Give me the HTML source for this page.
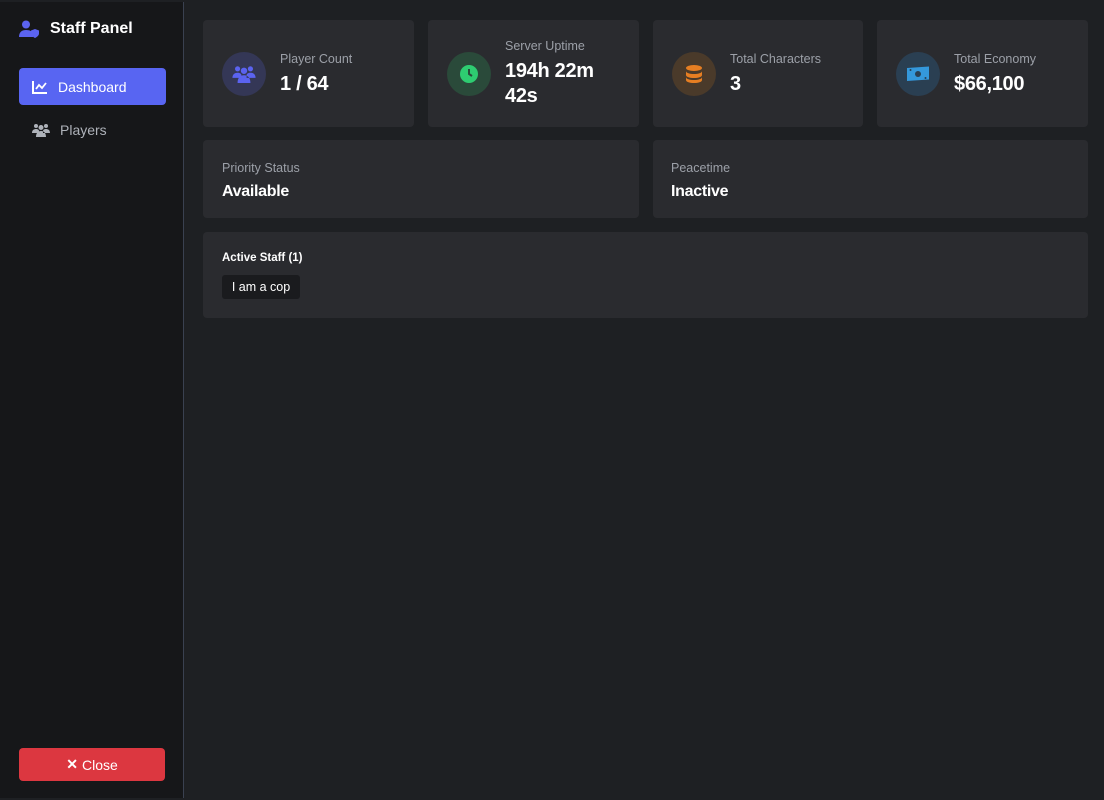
<!DOCTYPE html>
<html><head><meta charset="utf-8"><style>
*{box-sizing:border-box;margin:0;padding:0}
body{width:1104px;height:800px;background:#1e2023;font-family:"Liberation Sans",sans-serif;overflow:hidden;position:relative}
.side{position:absolute;left:0;top:2px;width:184px;height:796px;background:#161719;border-right:1px solid #3a4150}
.brand{position:absolute;left:19px;top:20px;color:#fff;font-weight:bold;font-size:16px;display:flex;align-items:center;gap:9px}
.nav{position:absolute;left:19px;width:147px;height:37px;border-radius:4px;display:flex;align-items:center;padding-left:13px;gap:10px;font-size:14px}
.close{position:absolute;left:19px;top:746px;width:146px;height:33px;background:#dc3740;border-radius:4px;color:#fff;font-size:14px;display:flex;align-items:center;justify-content:center}
.card{position:absolute;background:#2a2b2f;border-radius:4px}
.ic{position:absolute;left:19px;top:32px;width:44px;height:44px;border-radius:50%;display:flex;align-items:center;justify-content:center}
.lbl{color:#9ca0a8;font-size:12.5px}
.val{color:#fff;font-weight:bold;font-size:20px;margin-top:6px;line-height:25px;letter-spacing:-0.3px}
.t{position:absolute;left:77px;top:31px}
</style></head><body>
<div class="side">
 <div class="brand" style="top:18px"><svg width="22" height="18" viewBox="0 0 22 18"><circle cx="7" cy="4.5" r="4" fill="#5b63f0"/><path d="M0 17c0-5 3-7 7-7s6 1.5 7 3v4z" fill="#5b63f0"/><path d="M16 9l4 1.5v3c0 2-2 3.5-4 4.5-2-1-4-2.5-4-4.5v-3z" fill="#5b63f0"/></svg>Staff Panel</div>
 <div class="nav" style="top:66px;background:#5865f2;color:#fff"><svg width="16" height="14" viewBox="0 0 16 14"><path d="M1 1v12h14" stroke="#fff" stroke-width="2" fill="none"/><path d="M4 9l3-4 3 3 4-5" stroke="#fff" stroke-width="1.8" fill="none"/></svg>Dashboard</div>
 <div class="nav" style="top:109px;color:#aeb2b9"><svg width="18" height="14" viewBox="0 0 18 14"><circle cx="4" cy="3" r="2" fill="#aeb2b9"/><circle cx="14" cy="3" r="2" fill="#aeb2b9"/><circle cx="9" cy="4.5" r="2.5" fill="#aeb2b9"/><path d="M0 10c0-3 2-4 4-4s3 1 3 2v2zM18 10c0-3-2-4-4-4s-3 1-3 2v2zM4 14c0-4 2-6 5-6s5 2 5 6z" fill="#aeb2b9"/></svg>Players</div>
 <div class="close"><span style="font-weight:bold;margin-right:4px">✕</span>Close</div>
</div>
<div class="card" style="left:203px;top:20px;width:211px;height:107px">
 <div class="ic" style="background:#343756"><svg width="24" height="18" viewBox="0 0 18 14"><circle cx="4" cy="3" r="2" fill="#5b63f0"/><circle cx="14" cy="3" r="2" fill="#5b63f0"/><circle cx="9" cy="4.5" r="2.5" fill="#5b63f0"/><path d="M0 10c0-3 2-4 4-4s3 1 3 2v2zM18 10c0-3-2-4-4-4s-3 1-3 2v2zM4 14c0-4 2-6 5-6s5 2 5 6z" fill="#5b63f0"/></svg></div>
 <div class="t" style="top:32px"><div class="lbl">Player Count</div><div class="val">1 / 64</div></div></div>
<div class="card" style="left:428px;top:20px;width:211px;height:107px">
 <div class="ic" style="background:#2a4a3a"><svg width="20" height="20" viewBox="0 0 20 20"><circle cx="10" cy="10" r="9" fill="#2ecc71"/><path d="M10 5v5l3 2" stroke="#2a4a3a" stroke-width="2" fill="none"/></svg></div>
 <div class="t" style="top:19px"><div class="lbl">Server Uptime</div><div class="val">194h 22m<br>42s</div></div></div>
<div class="card" style="left:653px;top:20px;width:210px;height:107px">
 <div class="ic" style="background:#4a3a2a"><svg width="18" height="20" viewBox="0 0 18 20"><ellipse cx="9" cy="4" rx="8" ry="3" fill="#e67e22"/><path d="M1 7c0 4 16 4 16 0v4c0 4-16 4-16 0zM1 13c0 4 16 4 16 0v3c0 4-16 4-16 0z" fill="#e67e22"/></svg></div>
 <div class="t" style="top:32px"><div class="lbl">Total Characters</div><div class="val">3</div></div></div>
<div class="card" style="left:877px;top:20px;width:211px;height:107px">
 <div class="ic" style="background:#2a3f52"><svg width="22" height="16" viewBox="0 0 22 16"><path d="M0 2h22v13H0z" fill="#3498db" transform="skewY(-4)"/><circle cx="11" cy="8" r="3" fill="#2a3f52"/><circle cx="3.5" cy="4" r="1" fill="#2a3f52"/><circle cx="18.5" cy="12" r="1" fill="#2a3f52"/></svg></div>
 <div class="t" style="top:32px"><div class="lbl">Total Economy</div><div class="val">$66,100</div></div></div>
<div class="card" style="left:203px;top:140px;width:436px;height:78px"><div style="position:absolute;left:19px;top:21px"><div class="lbl">Priority Status</div><div class="val" style="font-size:16px;margin-top:4px">Available</div></div></div>
<div class="card" style="left:653px;top:140px;width:435px;height:78px"><div style="position:absolute;left:18px;top:21px"><div class="lbl">Peacetime</div><div class="val" style="font-size:16px;margin-top:4px">Inactive</div></div></div>
<div class="card" style="left:203px;top:232px;width:885px;height:86px">
 <div style="position:absolute;left:19px;top:20px;color:#fff;font-weight:bold;font-size:11.5px">Active Staff (1)</div>
 <div style="position:absolute;left:19px;top:43px;width:78px;height:24px;background:#1a1b1e;border-radius:3px;color:#fff;font-size:12.5px;display:flex;align-items:center;justify-content:center">I am a cop</div>
</div>
</body></html>
